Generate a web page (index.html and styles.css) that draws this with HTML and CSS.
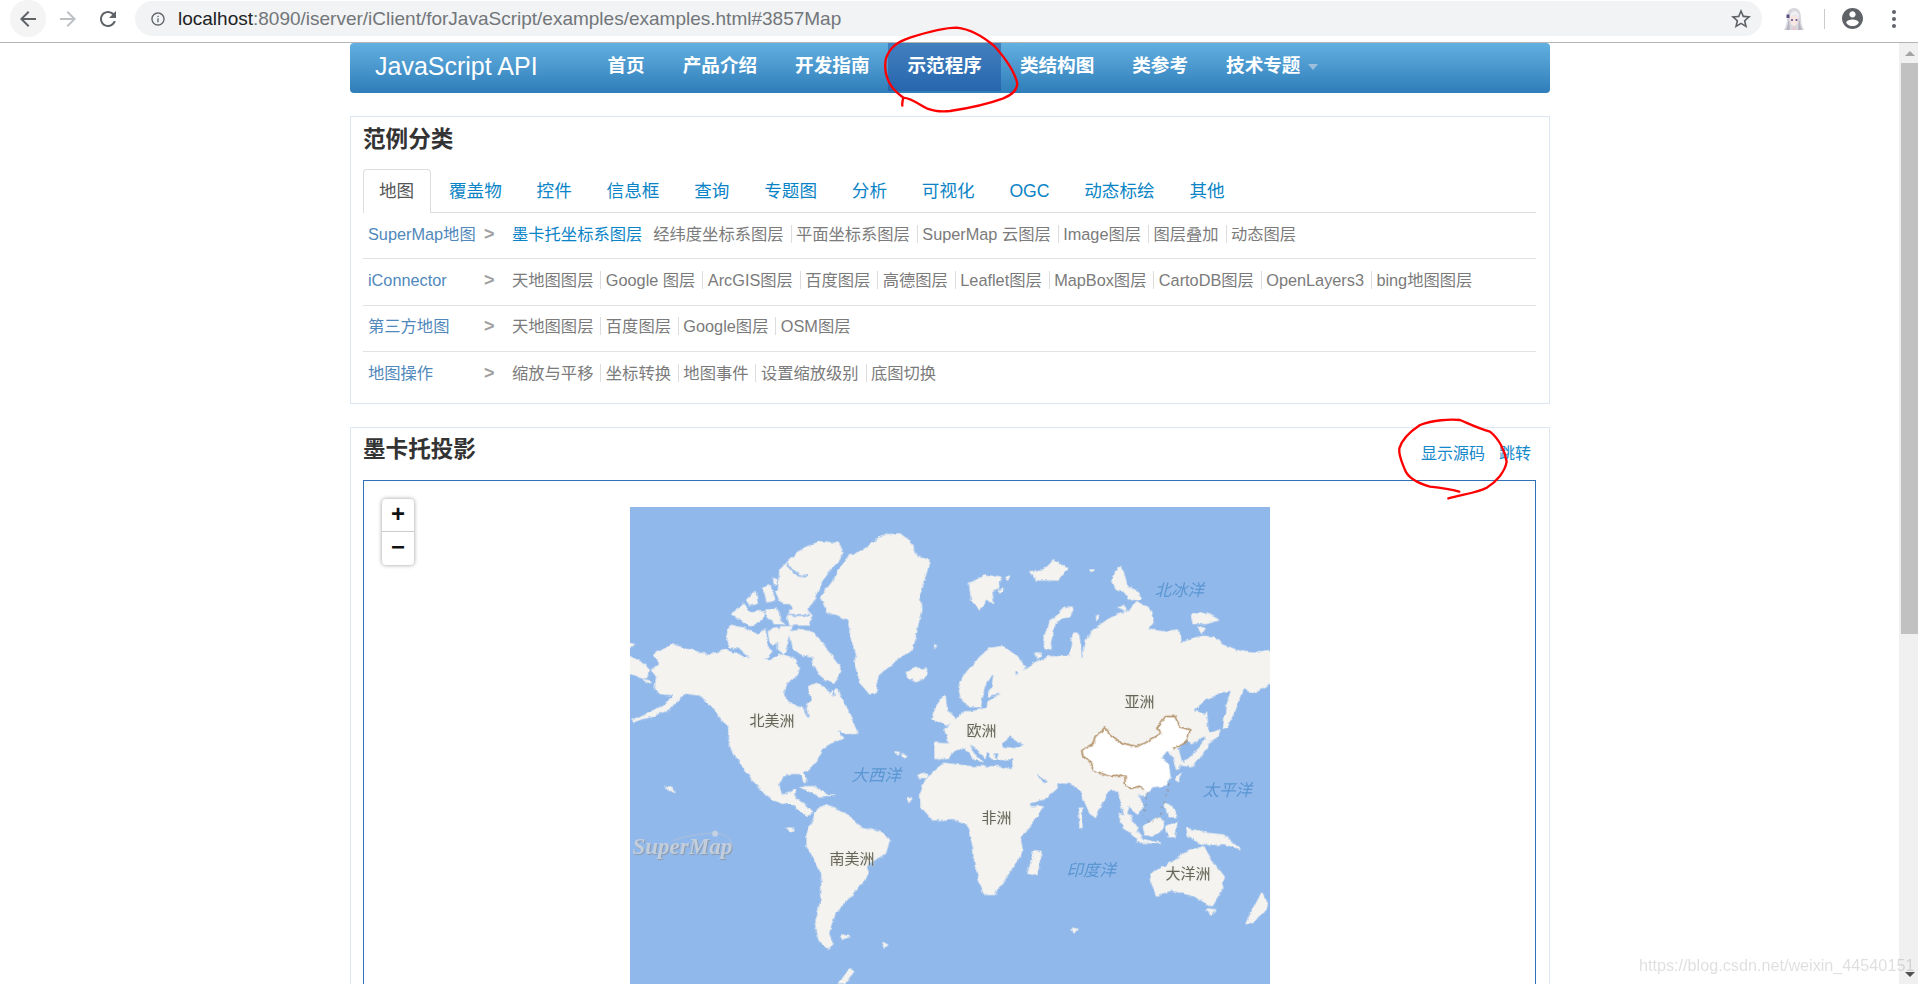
FILE: index.html
```html
<!DOCTYPE html>
<html lang="zh-CN">
<head>
<meta charset="utf-8">
<title>SuperMap iClient for JavaScript</title>
<link rel="stylesheet" href="styles.css">
</head>
<body>
<header class="chrome">
  <button class="tb-btn tb-back"><svg class="ico" viewBox="0 0 24 24"><path class="i-dark" d="M20 11H7.83l5.59-5.59L12 4l-8 8 8 8 1.41-1.41L7.83 13H20v-2z"/></svg></button>
  <button class="tb-btn"><svg class="ico" viewBox="0 0 24 24"><path class="i-light" d="M12 4l-1.41 1.41L16.17 11H4v2h12.17l-5.58 5.59L12 20l8-8z"/></svg></button>
  <button class="tb-btn"><svg class="ico" viewBox="0 0 24 24"><path class="i-dark" d="M17.65 6.35C16.2 4.9 14.21 4 12 4c-4.42 0-7.99 3.58-7.99 8s3.57 8 7.99 8c3.73 0 6.84-2.55 7.73-6h-2.08c-.82 2.33-3.04 4-5.65 4-3.31 0-6-2.69-6-6s2.69-6 6-6c1.66 0 3.14.69 4.22 1.78L13 11h7V4l-2.35 2.35z"/></svg></button>
  <div class="omni">
    <svg class="ico-s" viewBox="0 0 24 24"><path class="i-dark" d="M11 7h2v2h-2zm0 4h2v6h-2zm1-9C6.48 2 2 6.48 2 12s4.48 10 10 10 10-4.48 10-10S17.52 2 12 2zm0 18c-4.41 0-8-3.59-8-8s3.59-8 8-8 8 3.59 8 8-3.59 8-8 8z"/></svg>
    <span class="url"><span class="url-host">localhost</span>:8090/iserver/iClient/forJavaScript/examples/examples.html#3857Map</span>
    <svg class="ico star" viewBox="0 0 24 24"><path class="i-dark" d="M22 9.24l-7.19-.62L12 2 9.19 8.63 2 9.24l5.46 4.73L5.82 21 12 17.27 18.18 21l-1.63-7.03L22 9.24zM12 15.4l-3.76 2.27 1-4.28-3.32-2.88 4.38-.38L12 6.1l1.71 4.04 4.38.38-3.32 2.88 1 4.28L12 15.4z"/></svg>
  </div>
  <div class="tb-right">
    <svg class="avatar" viewBox="0 0 22 24">
      <path fill="#d9d8de" d="M11 1C6 1 4 5 4 11c0 5-1 8-3 12h20c-2-4-3-7-3-12 0-6-2-10-7-10z"/>
      <path fill="#f7e7e2" d="M7 10c1-2 7-2 8 0 0 5-1 9-4 9s-4-4-4-9z"/>
      <path fill="#f0eff3" d="M6 11c1-4 3-7 6-7 3 1 4 3 4 7-2-2-3-3-4-3-2 0-4 1-6 3z"/>
      <path fill="#b7b4c2" d="M3 23c2-4 2-8 3-11l1 11zM19 23c-2-4-2-8-3-11l-1 11z"/>
      <circle cx="9" cy="13" r="1.1" fill="#6d4f92"/><circle cx="13.5" cy="13" r="1.1" fill="#6d4f92"/>
      <rect x="3.5" y="7.5" width="3" height="3.5" fill="#5d4d80"/>
      <path fill="#e6c7cf" d="M8 23l3-4 3 4z"/>
    </svg>
    <span class="tb-sep"></span>
    <svg class="profile" viewBox="2 2 20 20"><path class="i-dark" d="M12 2C6.48 2 2 6.48 2 12s4.48 10 10 10 10-4.48 10-10S17.52 2 12 2zm0 3c1.66 0 3 1.34 3 3s-1.34 3-3 3-3-1.34-3-3 1.34-3 3-3zm0 14.2c-2.5 0-4.71-1.28-6-3.22.03-1.99 4-3.08 6-3.08 1.99 0 5.97 1.09 6 3.08-1.29 1.94-3.5 3.22-6 3.22z"/></svg>
    <span class="dots"><i></i><i></i><i></i></span>
  </div>
</header>

<div class="viewport">
  <main class="page">
    <nav class="navbar">
      <a class="brand">JavaScript API</a>
      <ul class="nav">
        <li>首页</li>
        <li>产品介绍</li>
        <li>开发指南</li>
        <li class="active">示范程序</li>
        <li>类结构图</li>
        <li>类参考</li>
        <li>技术专题<span class="caret"></span></li>
      </ul>
    </nav>

    <section class="panel panel-cat">
      <h3 class="panel-title">范例分类</h3>
      <ul class="tabs">
        <li class="tab active">地图</li>
        <li class="tab">覆盖物</li>
        <li class="tab">控件</li>
        <li class="tab">信息框</li>
        <li class="tab">查询</li>
        <li class="tab">专题图</li>
        <li class="tab">分析</li>
        <li class="tab">可视化</li>
        <li class="tab">OGC</li>
        <li class="tab">动态标绘</li>
        <li class="tab">其他</li>
      </ul>
      <div class="cat-row">
        <span class="cat-label">SuperMap地图</span><span class="cat-arrow">&gt;</span>
        <div class="cat-links">
          <a class="current">墨卡托坐标系图层</a><a>经纬度坐标系图层</a><a>平面坐标系图层</a><a>SuperMap 云图层</a><a>Image图层</a><a>图层叠加</a><a class="last">动态图层</a>
        </div>
      </div>
      <div class="cat-row">
        <span class="cat-label">iConnector</span><span class="cat-arrow">&gt;</span>
        <div class="cat-links">
          <a>天地图图层</a><a>Google 图层</a><a>ArcGIS图层</a><a>百度图层</a><a>高德图层</a><a>Leaflet图层</a><a>MapBox图层</a><a>CartoDB图层</a><a>OpenLayers3</a><a class="last">bing地图图层</a>
        </div>
      </div>
      <div class="cat-row">
        <span class="cat-label">第三方地图</span><span class="cat-arrow">&gt;</span>
        <div class="cat-links">
          <a>天地图图层</a><a>百度图层</a><a>Google图层</a><a class="last">OSM图层</a>
        </div>
      </div>
      <div class="cat-row">
        <span class="cat-label">地图操作</span><span class="cat-arrow">&gt;</span>
        <div class="cat-links">
          <a>缩放与平移</a><a>坐标转换</a><a>地图事件</a><a>设置缩放级别</a><a class="last">底图切换</a>
        </div>
      </div>
    </section>

    <section class="panel panel-map">
      <div class="map-head">
        <h3 class="panel-title">墨卡托投影</h3>
        <div class="map-actions"><a>显示源码</a><a>跳转</a></div>
      </div>
      <div class="map-box">
        <div class="zoom-ctl"><span class="zoom-btn">+</span><span class="zoom-btn">−</span></div>
        <div class="map">
          <svg class="map-svg" viewBox="0 0 1920 1920">
            <defs>
              <filter id="coast" x="-2%" y="-2%" width="104%" height="104%" filterUnits="objectBoundingBox" primitiveUnits="userSpaceOnUse">
                <feTurbulence type="fractalNoise" baseFrequency="0.045" numOctaves="3" seed="4" result="n"/>
                <feDisplacementMap in="SourceGraphic" in2="n" scale="13" xChannelSelector="R" yChannelSelector="G"/>
              </filter>
            </defs>
            <rect class="water" width="1920" height="1920"/>
            <g filter="url(#coast)">
            <!-- Americas north, Greenland: traced 3x -->
            <g transform="translate(0,39)">
              <path class="land" d="M640 130L660 105 690 95 710 85 735 60 770 44 810 42 835 60 850 85 862 112 897 120 888 160 868 215 872 270 860 330 848 385 790 425 748 465 735 520 720 522 692 490 675 430 680 400 665 360 655 300 620 283 592 275 572 230 605 190Z"/>
              <path class="land" d="M638 95L625 70 570 65 520 85 475 125 450 150 445 210 470 240 490 262 470 285 480 315 535 315 545 285 530 270 550 240 570 190 600 150 632 112Z"/>
              <path class="land" d="M305 285L340 250 352 275 400 275 396 300 360 318 330 295ZM350 240L375 215 382 250 360 255ZM398 205L420 198 435 240 415 245ZM437 215L455 215 480 250 455 250ZM405 270L440 265 450 300 465 312 440 310 415 295ZM428 175L438 180 440 192 430 190ZM290 350L300 315 340 325 385 345 405 330 410 380 425 395 400 420 360 410 330 385 300 380ZM415 335L440 320 450 350 435 375 420 365ZM480 335L520 330 550 340 580 375 605 410 635 450 610 490 580 475 555 440 530 410 510 400 490 385ZM452 320L485 320 472 370 460 402 445 390 446 350Z"/>
              <path class="land" d="M72 405L125 375 170 388 235 405 290 390 340 410 420 420 450 405 480 410 497 420 508 445 495 470 470 490 460 520 475 550 520 565 530 595 540 600 530 560 545 540 535 500 560 490 600 520 620 510 650 570 665 600 682 640 650 640 620 630 640 655 600 670 575 685 560 720 530 755 515 755 530 785 523 787 510 760 470 760 445 790 455 830 495 810 495 840 520 850 548 880 525 887 490 855 430 840 385 800 345 745 310 700 298 670 300 630 270 590 240 550 210 525 175 520 150 530 120 565 60 590 10 604 10 598 60 580 110 550 135 525 90 520 75 510 80 470 65 450 90 430Z"/>
              <path class="land" d="M0 410L30 425 58 450 45 475 0 460ZM0 368L15 371 5 382 0 380ZM832 455L860 445 890 448 885 470 860 485 838 475ZM510 800L550 800 590 825 614 825 570 828 530 810ZM107 803L125 805 138 820 125 815ZM45 480L62 485 50 490ZM915 375L922 377 914 382Z"/>
              <path class="land" d="M795 695L808 698 803 704ZM815 700L830 708 825 714ZM865 765L890 762 885 772 868 772ZM830 830L845 835 838 846ZM470 925L488 930 480 935Z"/>
              <path class="sea" d="M462 525L490 482 530 490 540 530 530 566 490 555Z"/>
              <path class="sea" d="M525 405L548 410 545 450 570 470 540 490 515 470 530 440Z"/>
              <path class="channel" d="M472 130C490 165 515 170 535 165M470 285L540 285M440 322L420 300M605 490L615 525"/>
            </g>
            <!-- Eurasia: traced 3x -->
            <g transform="translate(900,39)">
              <path class="land" d="M15 715L15 670 60 672 45 630 75 600 105 575 125 575 150 570 150 560 120 560 90 530 85 515 100 470 140 420 180 385 215 380 255 405 285 440 270 460 255 450 255 470 280 455 310 430 360 410 400 410 418 410 430 340 445 340 450 370 455 430 470 360 490 330 540 295 600 270 620 245 660 270 670 310 650 330 700 335 745 330 755 370 800 350 850 350 880 375 930 395 970 400 1020 395 1020 490 970 520 940 505 930 530 915 570 890 620 880 625 890 560 905 510 880 515 830 535 790 570 820 580 830 640 790 670 770 660 735 695 725 700 710 690 695 715 715 735 720 770 705 795 670 800 645 815 640 830 620 815 640 860 620 880 590 855 595 880 625 925 610 925 580 880 565 810 540 810 500 875 497 892 480 880 450 810 420 790 385 787 380 805 345 835 295 850 250 775 250 745 248 715 190 720 170 690 165 715 145 690 115 668 130 700 155 725 130 715 100 680 65 695 55 715Z"/>
              <path class="land" d="M5 595L30 540 45 530 50 570 75 600 50 615 35 608ZM118 190L165 165 210 175 205 205 185 215 190 250 170 235 150 270 125 240ZM300 155L340 150 370 120 410 145 385 180 320 180ZM545 180L570 140 585 170 590 200 625 215 630 235 595 240 590 215 560 210ZM340 370L355 310 400 265 430 265 420 285 375 310 360 370 365 390 345 385ZM785 285L830 280 865 300 830 310 790 310ZM805 320L825 325 815 340ZM480 150L492 150 485 157ZM228 175L240 172 232 180ZM205 212L220 208 212 220ZM565 262L580 255 585 272ZM500 285L508 283 500 305ZM318 402L332 402 325 415Z"/>
              <path class="land" d="M565 880L590 890 635 950 620 955 580 920ZM640 920L670 895 700 900 700 925 670 945 645 945ZM620 955L690 970 620 965ZM710 920L740 905 735 950 715 950ZM705 850L725 860 740 890 715 890ZM770 925L830 940 880 945 930 985 880 970 840 975 800 965 775 945ZM755 735L810 680 825 660 835 680 785 740ZM830 645L870 630 860 650 838 665ZM818 590L830 580 835 670 825 660ZM725 700L745 690 755 730 740 745ZM448 865L455 865 456 925 450 925ZM740 775L755 760 745 785Z"/>
              <path class="channel" d="M245 772L292 850M298 862L350 852"/>
              <path class="sea" d="M322 760L355 788 340 788ZM215 667L240 650 282 676 250 684 220 680ZM150 570L165 500 190 460 185 500 170 530 210 520 172 545 170 565ZM190 700L205 700 200 720Z"/>
              <path class="china" d="M455 692L490 670 495 650 525 622 545 650 580 670 620 680 660 660 695 640 680 625 705 590 735 590 750 620 780 630 770 665 730 690 705 695 695 715 715 735 720 770 705 795 670 800 645 815 635 798 600 805 585 790 585 768 540 770 490 750 480 725 460 710Z"/>
              <path class="china-line" d="M640 812L635 798 600 805 585 790 585 768 540 770 490 750 480 725 460 710 455 692 490 670 495 650 525 622 545 650 580 670 620 680 660 660 695 640 680 625 705 590 735 590 750 620 780 630 770 665 730 690"/>
              <path class="china-dash" d="M650 815L648 860 640 888 660 908 690 890 705 840 717 790"/>
            </g>
            <!-- Southern land, traced from the stretched crop -->
            <g transform="translate(-30,-21) scale(1.2626,1)">
              <path class="land" d="M445 1000L470 930 490 918 540 945 575 985 625 1000 640 1020 630 1060 590 1085 585 1130 545 1190 510 1240 495 1300 505 1335 495 1347 470 1320 465 1270 480 1190 480 1120 445 1040Z"/>
              <path class="land" d="M712 890L730 830 770 790 835 800 900 800 935 810 940 840 975 920 1005 920 975 975 950 1010 955 1050 930 1110 890 1180 865 1180 845 1100 840 1040 825 970 790 955 745 960 720 925Z"/>
              <path class="land" d="M970 1120L985 1052 1000 1055 990 1125ZM1262 1120L1300 1095 1340 1060 1385 1040 1410 1090 1435 1130 1425 1180 1405 1220 1370 1190 1310 1170 1275 1185 1265 1150ZM1395 1230L1415 1232 1405 1245ZM1488 1270L1525 1180 1540 1215 1505 1270ZM525 1305L545 1310 530 1315ZM520 1452L545 1410 555 1412 535 1452ZM398 985L410 985 405 992ZM625 1328L635 1335 630 1340ZM1075 1285L1085 1288 1080 1295Z"/>
            </g>
            </g>
            <g class="logo-arc" transform="translate(-30,-21) scale(1.2626,1)"><path d="M125 1022C160 1006 195 1000 226 999C250 1002 265 1015 268 1045"/><ellipse class="logo-dot" cx="226" cy="1001" rx="7" ry="9"/></g>
          </svg>
          <span class="lbl lbl-na">北美洲</span>
          <span class="lbl lbl-as">亚洲</span>
          <span class="lbl lbl-eu">欧洲</span>
          <span class="lbl lbl-af">非洲</span>
          <span class="lbl lbl-sa">南美洲</span>
          <span class="lbl lbl-oc">大洋洲</span>
          <span class="sea-lbl sea-at">大西洋</span>
          <span class="sea-lbl sea-pa">太平洋</span>
          <span class="sea-lbl sea-in">印度洋</span>
          <span class="sea-lbl sea-ar">北冰洋</span>
          <span class="logo">SuperMap</span>
        </div>
      </div>
    </section>
  </main>
  <aside class="scrollbar">
    <span class="sb-up"></span>
    <span class="sb-thumb"></span>
    <span class="sb-down"></span>
  </aside>
</div>

<svg class="ink" viewBox="0 0 1918 984">
  <path transform="translate(870,15) scale(.3333)" d="M97 272C96 262 98 255 100 248C125 250 150 270 170 280C190 288 210 291 240 288C280 282 340 272 400 250C425 240 442 228 442 205C435 175 415 140 375 95C340 65 300 42 260 38C220 38 170 52 120 68C85 80 60 95 48 130C42 160 48 190 65 215C75 230 90 240 100 248"/>
  <path transform="translate(1390,415) scale(.3333)" d="M208 230C180 222 150 218 120 215C85 205 55 190 45 165C35 140 25 120 28 100C35 75 60 50 90 30C130 15 180 12 210 15C235 25 260 38 300 50C325 70 345 105 350 140C345 170 320 200 290 218C265 232 220 238 175 250"/>
</svg>
<span class="watermark">https://blog.csdn.net/weixin_44540151</span>
</body>
</html>
```
FILE: styles.css
```css
* { box-sizing: border-box; }
html, body { margin: 0; height: 100%; overflow: hidden; }
body {
  position: relative;
  display: flex;
  flex-direction: column;
  background: #fff;
  font-family: "Liberation Sans", "Noto Sans CJK SC", sans-serif;
  color: #333;
}
ul { list-style: none; margin: 0; padding: 0; }
h3 { margin: 0; }

/* browser chrome */
.chrome {
  flex: none;
  height: 43px;
  display: flex;
  align-items: flex-start;
  border-bottom: 1px solid #b4b4b4;
  background: #fff;
}
.tb-btn {
  width: 40px;
  height: 37px;
  padding: 0;
  border: 0;
  background: none;
  display: flex;
  align-items: center;
  justify-content: center;
}
.tb-back {
  width: 36px;
  margin: 0 2px 0 10px;
  background: #f4f4f5;
  border-radius: 18px;
}
.ico { width: 24px; height: 24px; display: block; }
.ico-s { width: 16px; height: 16px; flex: none; }
.i-dark { fill: #5f6368; }
.i-light { fill: #bdc1c6; }
.omni {
  flex: 1;
  height: 35px;
  margin: 1px 0 0 7px;
  padding: 0 9px 0 15px;
  display: flex;
  align-items: center;
  background: #f1f3f4;
  border-radius: 18px;
}
.url {
  flex: 1;
  margin-left: 12px;
  font-size: 19px;
  color: #72767a;
  white-space: nowrap;
}
.url-host { color: #202124; }
.tb-right {
  flex: none;
  width: 156px;
  height: 37px;
  display: flex;
  align-items: center;
  padding-left: 21px;
}
.avatar { width: 22px; height: 24px; }
.tb-sep { width: 1px; height: 20px; margin-left: 19px; background: #c9cbce; }
.profile { width: 21px; height: 21px; margin-left: 17px; }
.dots { display: flex; flex-direction: column; gap: 3px; margin-left: 29px; }
.dots i { display: block; width: 4px; height: 4px; border-radius: 50%; background: #5f6368; }

/* page */
.viewport { flex: 1; min-height: 0; display: flex; }
.page { flex: 1; min-width: 0; overflow: hidden; padding-left: 350px; }

.navbar {
  width: 1200px;
  height: 50px;
  display: flex;
  background: linear-gradient(#62b0e0, #2f7db9);
  border-radius: 4px;
  color: #fff;
}
.brand {
  width: 238.5px;
  padding-left: 25px;
  font-size: 25px;
  line-height: 46px;
  white-space: nowrap;
}
.nav { display: flex; height: 48px; }
.nav li {
  padding: 0 19px;
  font-size: 18.6px;
  font-weight: 700;
  line-height: 46px;
  white-space: nowrap;
}
.nav li.active { background: linear-gradient(#4280bf, #2766ad); }
.caret {
  display: inline-block;
  width: 0;
  height: 0;
  margin-left: 8px;
  vertical-align: 2px;
  border: 5px solid transparent;
  border-top: 6px solid #9dbfdc;
  border-bottom: 0;
}

.panel {
  width: 1200px;
  border: 1px solid #dbe6f1;
  padding: 0 13px 0 12px;
  background: #fff;
}
.panel-cat { margin-top: 23px; height: 288px; }
.panel-cat .panel-title { padding-top: 1px; }
.panel-map { margin-top: 23px; height: 700px; }
.panel-title {
  font-size: 22.6px;
  font-weight: 700;
  line-height: 44px;
  color: #333;
}
.tabs {
  display: flex;
  margin-top: 7px;
  height: 44px;
  border-bottom: 1px solid #ddd;
}
.tab {
  height: 44px;
  padding: 0 16px;
  margin-right: .8px;
  border: 1px solid transparent;
  border-bottom: 0;
  font-size: 17.6px;
  line-height: 42px;
  color: #0a84c6;
  white-space: nowrap;
}
.tab.active {
  padding-left: 15px;
  color: #555;
  background: #fff;
  border-color: #ddd;
  border-radius: 4px 4px 0 0;
}
.cat-row {
  height: 46.33px;
  display: flex;
  align-items: center;
  padding: 0 0 3px 5px;
  border-bottom: 1px solid #e2e2e2;
  font-size: 16.3px;
}
.cat-row:nth-last-child(-n+2) { padding-bottom: 5px; }
.cat-row:last-child { border-bottom: 0; }
.cat-label { width: 116px; line-height: 18px; color: #5088bb; white-space: nowrap; }
.cat-arrow { width: 28px; line-height: 18px; color: #a0a0a0; font-size: 18px; font-weight: 700; }
.cat-links { display: flex; align-items: center; color: #7b7b7b; white-space: nowrap; }
.cat-links a {
  padding-right: 7px;
  margin-right: 4.4px;
  line-height: 18px;
  border-right: 1px solid #ddd;
}
.cat-links a.current { color: #0a84c6; border-right-color: transparent; margin-right: 3px; }
.cat-links a.last { border-right: 0; }

.map-head { display: flex; justify-content: space-between; height: 52px; }
.map-actions { display: flex; gap: 14px; padding: 16px 5px 0 0; font-size: 16px; line-height: 20px; color: #1488cb; }
.map-box {
  position: relative;
  display: flex;
  justify-content: center;
  height: 800px;
  width: 1173px;
  padding-top: 26px;
  border: 1px solid #2f70b6;
  background: #fff;
}
.zoom-ctl {
  position: absolute;
  left: 18px;
  top: 18px;
  width: 32px;
  height: 66px;
  display: flex;
  flex-direction: column;
  background: #fff;
  border-radius: 4px;
  box-shadow: 0 0 4px rgba(0, 0, 0, .4);
}
.zoom-btn {
  height: 33px;
  text-align: center;
  font-size: 24px;
  font-weight: 700;
  line-height: 30px;
  color: #111;
}
.zoom-btn:first-child { border-bottom: 1px solid #ccc; }

/* map */
.map { position: relative; flex: none; width: 640px; height: 640px; overflow: hidden; }
.map-svg { display: block; width: 640px; height: 640px; filter: blur(.4px); }
.water { fill: #91b8ea; }
.land { fill: #f4f3f0; stroke: #f4f3f0; stroke-width: 4; stroke-linejoin: round; }
.sea { fill: #91b8ea; }
.channel { fill: none; stroke: #91b8ea; stroke-width: 5; }
.china { fill: #fff; }
.china-line { fill: none; stroke: #ae8a5e; stroke-width: 4.5; stroke-linejoin: round; }
.china-dash { fill: none; stroke: #8f7a60; stroke-width: 3; stroke-dasharray: 5 13; }
.logo-arc path { fill: none; stroke: #b9c5d6; stroke-width: 2; }
.logo-dot { fill: #c6d2e2; }
.lbl, .sea-lbl, .logo { position: absolute; line-height: 16px; white-space: nowrap; }
.lbl { font-size: 15px; color: #65655a; text-shadow: 0 0 3px #e6e4d4; }
.sea-lbl { font-size: 16.5px; font-style: italic; color: #5a96d2; }
.lbl-na { left: 120px; top: 206px; }
.lbl-as { left: 495px; top: 187px; }
.lbl-eu { left: 337px; top: 216px; }
.lbl-af { left: 352px; top: 303px; }
.lbl-sa { left: 200px; top: 344px; }
.lbl-oc { left: 536px; top: 359px; }
.sea-at { left: 222px; top: 260px; }
.sea-pa { left: 573px; top: 275px; }
.sea-in { left: 437px; top: 355px; }
.sea-ar { left: 525px; top: 75px; }
.logo {
  left: 3px;
  top: 328px;
  font-family: "Liberation Serif", serif;
  font-style: italic;
  font-weight: 700;
  font-size: 23px;
  line-height: 24px;
  color: #c3cedd;
  text-shadow: 1px 1px 1px #8c99aa;
}

/* scrollbar */
.scrollbar {
  flex: none;
  width: 19px;
  display: flex;
  flex-direction: column;
  align-items: flex-end;
  background: #f0f0f0;
}
.sb-up {
  width: 0;
  height: 0;
  margin: 8px 3px 7px 0;
  border: 5px solid transparent;
  border-bottom: 5px solid #a3a3a3;
  border-top: 0;
  border-left-width: 5.5px;
  border-right-width: 5.5px;
}
.sb-thumb { width: 17px; height: 571px; background: #c1c1c1; }
.sb-down {
  width: 0;
  height: 0;
  margin: auto 3px 7px 0;
  border: 5px solid transparent;
  border-top: 5px solid #505050;
  border-bottom: 0;
  border-left-width: 5.5px;
  border-right-width: 5.5px;
}

/* overlays */
.ink {
  position: absolute;
  left: 0;
  top: 0;
  width: 1918px;
  height: 984px;
  pointer-events: none;
}
.ink path { fill: none; stroke: #f00; stroke-width: 7; stroke-linecap: round; stroke-linejoin: round; }
.watermark {
  position: absolute;
  left: 1639px;
  top: 956px;
  font-size: 16.2px;
  line-height: 18px;
  color: rgba(0, 0, 0, .13);
  white-space: nowrap;
}
```
